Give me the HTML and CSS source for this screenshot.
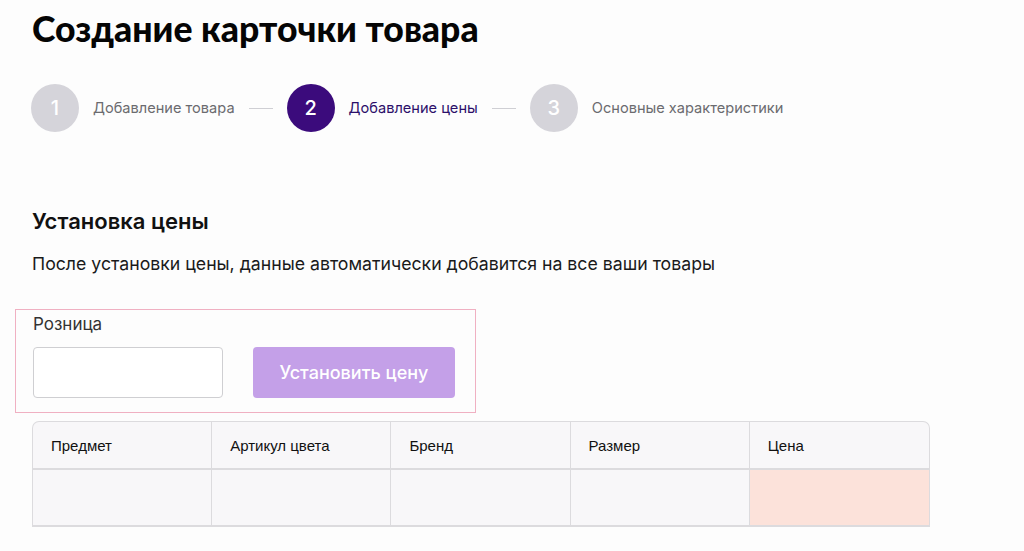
FILE: index.html
```html
<!DOCTYPE html>
<html lang="ru">
<head>
  <meta charset="UTF-8"/>
  <meta name="viewport" content="width=device-width, initial-scale=1.0"/>
  <title>Создание карточки товара</title>
  <link rel="stylesheet" href="styles.css">
</head>
<body>

  <!-- Header -->
  <h1 class="title">Создание карточки товара</h1>

  <!-- Steps -->
  <div class="steps">
    <div class="step">
      <span class="step-num">1</span>
      <span class="step-text">Добавление товара</span>
    </div>
    <span class="step-line"></span>
    <div class="step active">
      <span class="step-num">2</span>
      <span class="step-text">Добавление цены</span>
    </div>
    <span class="step-line"></span>
    <div class="step">
      <span class="step-num">3</span>
      <span class="step-text">Основные характеристики</span>
    </div>
  </div>

  <!-- Price -->
  <h2 class="section-title">Установка цены</h2>
  <p class="section-text">После установки цены, данные автоматически добавится на все ваши товары</p>

  <div class="price-box">
    <label class="price-label" for="retail">Розница</label>
    <div class="price-row">
      <input type="text" id="retail" class="price-input"/>
      <button class="price-btn">Установить цену</button>
    </div>
  </div>

  <table class="goods">
    <thead>
      <tr>
        <th>Предмет</th>
        <th>Артикул цвета</th>
        <th>Бренд</th>
        <th>Размер</th>
        <th>Цена</th>
      </tr>
    </thead>
    <tbody>
      <tr>
        <td></td>
        <td></td>
        <td></td>
        <td></td>
        <td class="price-cell"></td>
      </tr>
    </tbody>
  </table>

</body>
</html>
```

FILE: styles.css
```css
body {
  font-family: Inter, "Noto Sans", sans-serif;
  background-color: #fdfdfd;
  color: #111;
  margin: 0;
  padding: 0 32px;
}

.title {
  font-family: Lato, sans-serif;
  font-weight: 900;
  font-size: 35.6px;
  margin: 0;
  padding-top: 5px;
  line-height: 48px;
  color: #050505;
}

.steps {
  display: flex;
  align-items: center;
  margin-top: 31px;
  margin-left: -1px;
}

.step {
  display: flex;
  align-items: center;
  gap: 14px;
}

.step-num {
  width: 48px;
  height: 48px;
  border-radius: 50%;
  background-color: #d5d4da;
  color: #fff;
  font-size: 20px;
  font-weight: 500;
  display: flex;
  align-items: center;
  justify-content: center;
}

.step-text {
  font-size: 14.6px;
  color: #6b6b6f;
}

.step.active .step-num {
  background-color: #3b0b7c;
}

.step.active .step-text {
  color: #2c0f6a;
}

.step-line {
  width: 24px;
  height: 1px;
  background-color: #cfcfd4;
  margin: 0 14px;
}

.section-title {
  font-size: 22px;
  font-weight: 600;
  margin: 74px 0 0;
  line-height: 30px;
}

.section-text {
  font-size: 17.7px;
  margin: 15px 0 0;
  line-height: 26px;
  color: #1a1a1a;
}

.price-box {
  margin: 32px 0 0 -17px;
  width: 425px;
  padding: 2px 17px 14px;
  border: 1px solid #f0b0c2;
}

.price-label {
  display: block;
  font-size: 17px;
  color: #333;
  line-height: 24px;
}

.price-row {
  display: flex;
  gap: 30px;
  margin-top: 11px;
}

.price-input {
  width: 190px;
  height: 51px;
  box-sizing: border-box;
  border: 1px solid #cfcfd2;
  border-radius: 4px;
  background-color: #fff;
}

.price-btn {
  width: 202px;
  height: 51px;
  border: none;
  border-radius: 4px;
  background-color: #c4a0e8;
  color: #fff;
  font-family: Inter, sans-serif;
  font-weight: 500;
  font-size: 18px;
  cursor: pointer;
}

.goods {
  margin-top: 8px;
  width: 898px;
  border-collapse: separate;
  border-spacing: 0;
  table-layout: fixed;
  font-family: "Liberation Sans", Arial, sans-serif;
  font-size: 15px;
  background-color: #f8f7f9;
  border: 1px solid #dcdbde;
  border-bottom: none;
  border-radius: 7px 7px 0 0;
}

.goods th {
  font-weight: normal;
  text-align: left;
  color: #111;
  height: 46px;
  padding: 0 0 0 18px;
  border-right: 1px solid #dcdbde;
  border-bottom: 2px solid #dcdbde;
}

.goods td {
  height: 55px;
  padding: 0;
  border-right: 1px solid #dcdbde;
  border-bottom: 2px solid #dcdbde;
}

.goods th:last-child,
.goods td:last-child {
  border-right: none;
}

.goods .price-cell {
  background-color: #fce2da;
}
```
